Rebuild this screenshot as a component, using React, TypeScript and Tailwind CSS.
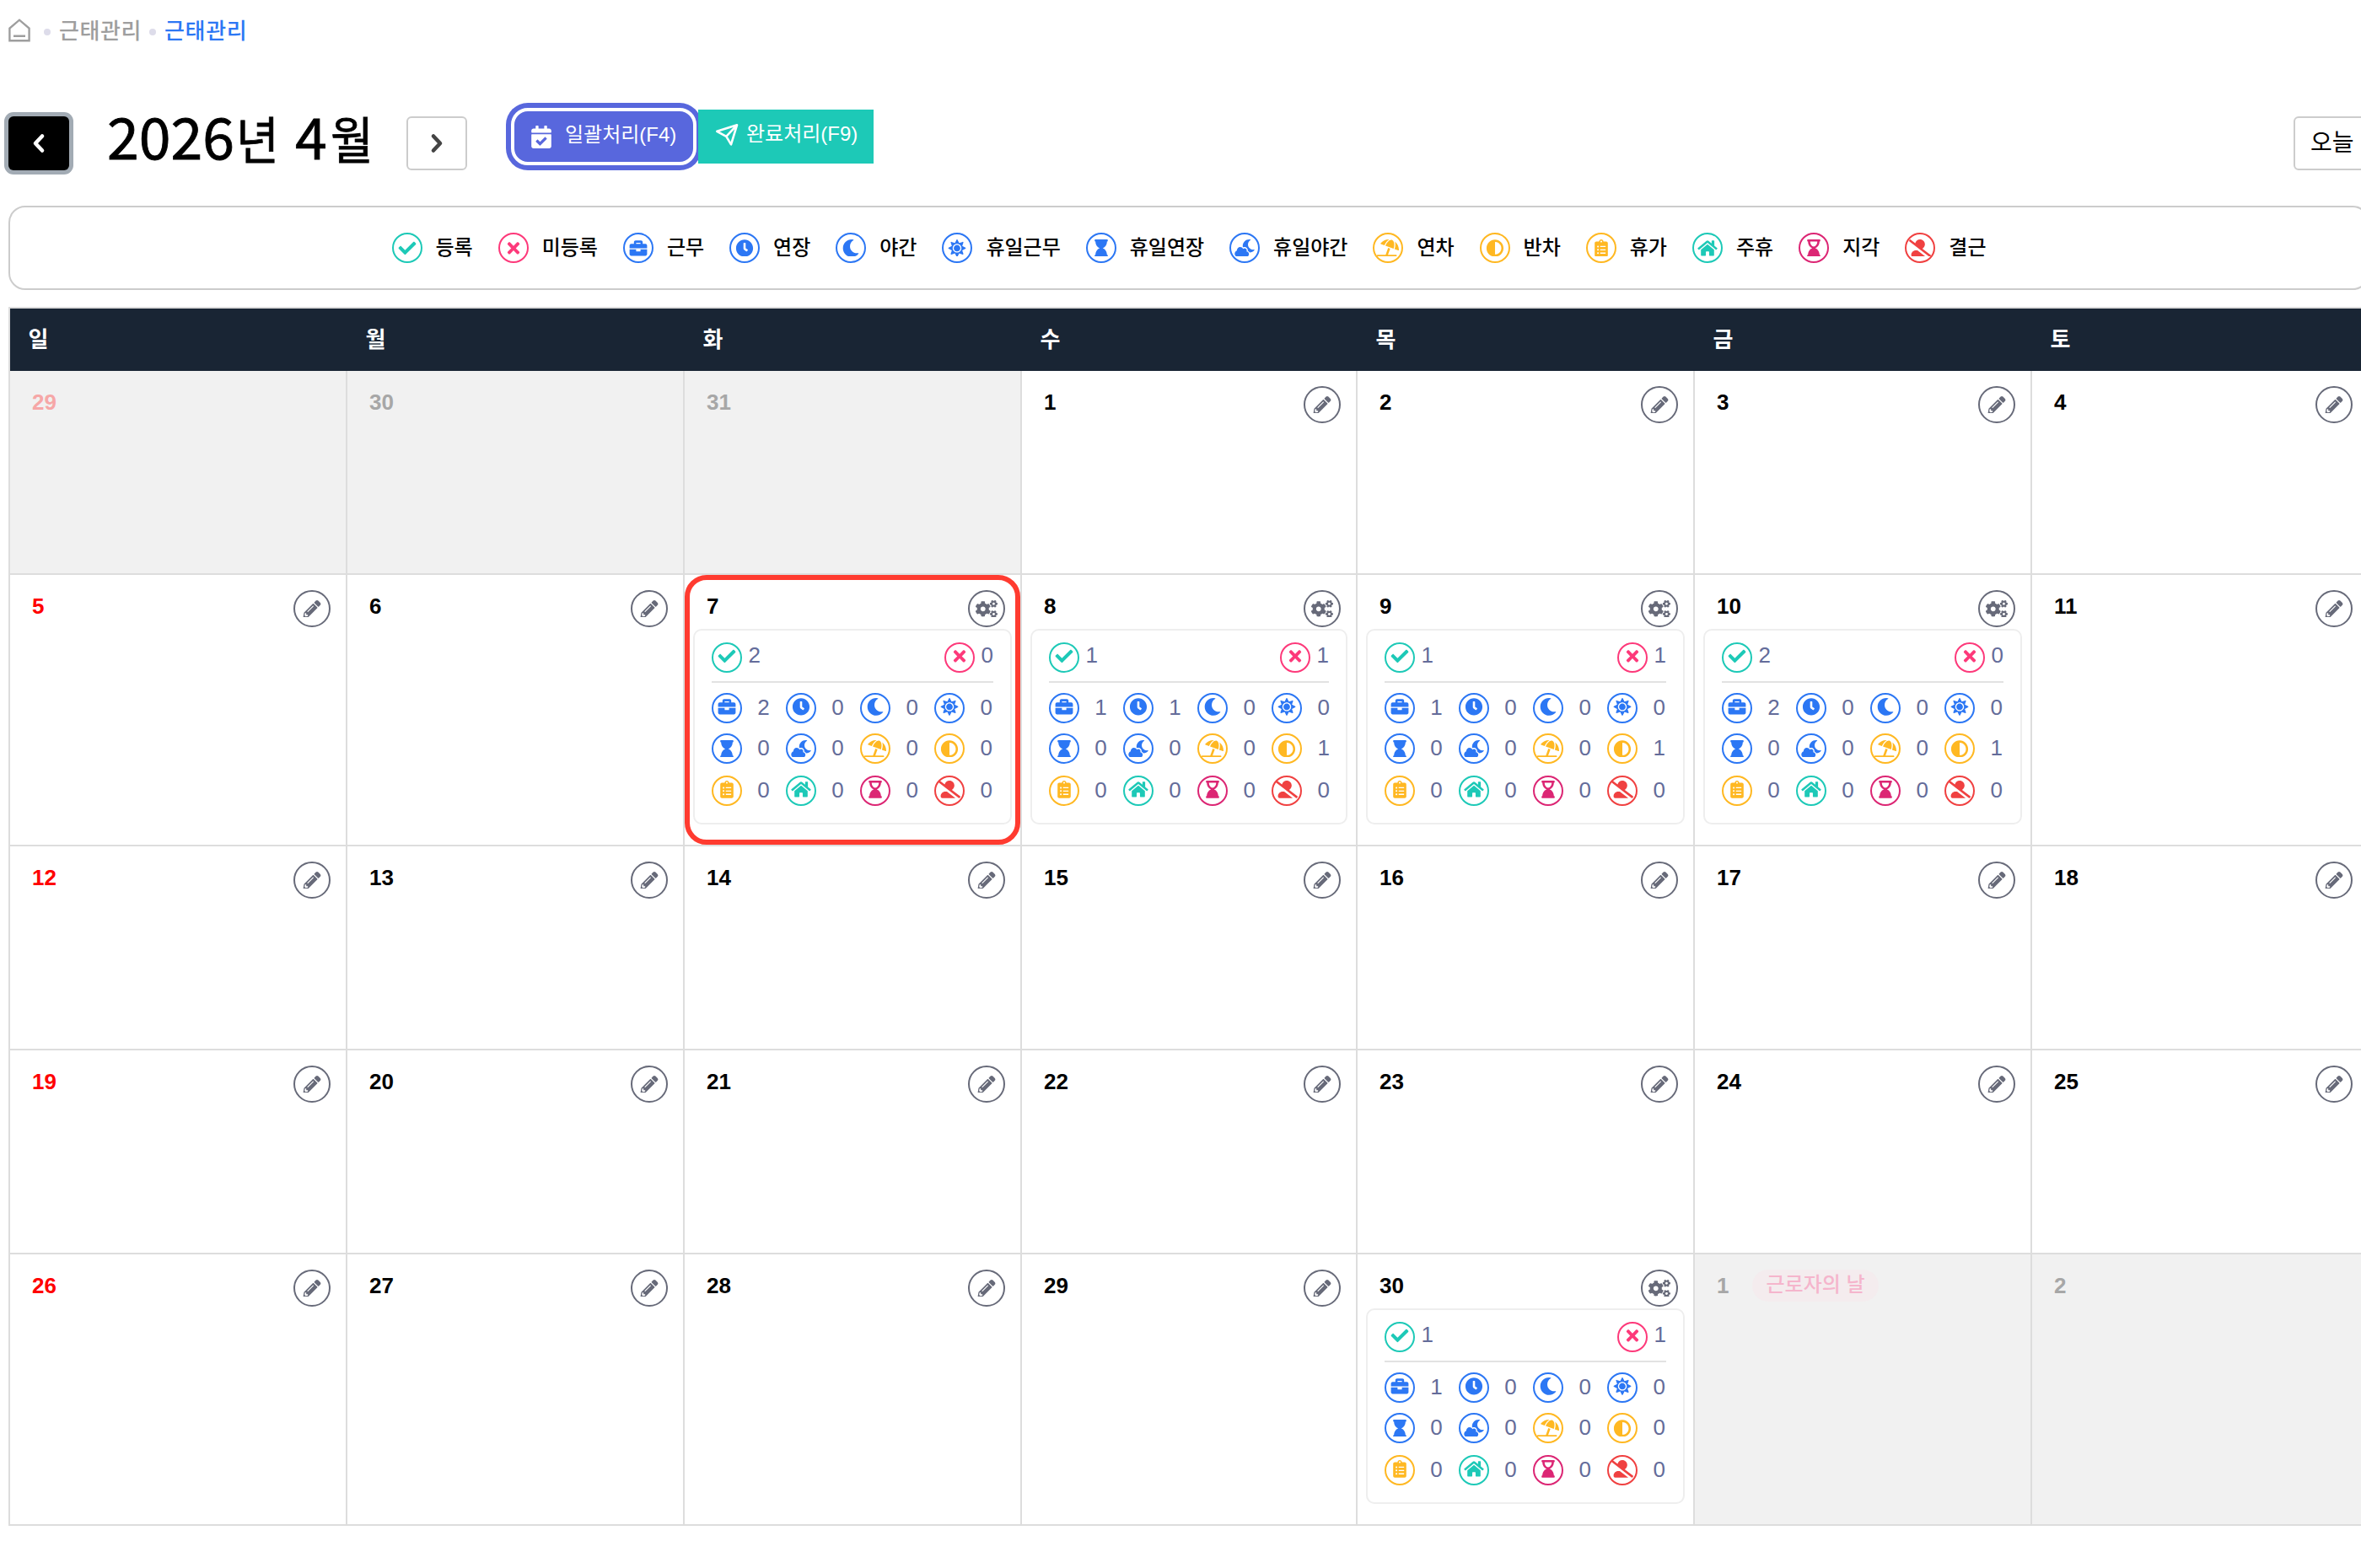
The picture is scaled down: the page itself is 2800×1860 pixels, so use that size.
import React from "react";
import type { IconType } from "react-icons";
import {
  FaAdjust,
  FaBriefcase,
  FaCalendarCheck,
  FaCheck,
  FaClipboardList,
  FaClock,
  FaCloudMoon,
  FaCogs,
  FaHome,
  FaHourglass,
  FaHourglassEnd,
  FaMoon,
  FaPencilAlt,
  FaSun,
  FaTimes,
  FaUmbrellaBeach,
  FaUserAltSlash,
} from "react-icons/fa";

type Kind = { label: string; icon: IconType; color: string };

const registered: Kind = { label: "등록", icon: FaCheck, color: "text-[#1dc9b7]" };
const unregistered: Kind = { label: "미등록", icon: FaTimes, color: "text-[#fd397a]" };

const kinds: Kind[] = [
  { label: "근무", icon: FaBriefcase, color: "text-[#2c77f4]" },
  { label: "연장", icon: FaClock, color: "text-[#2c77f4]" },
  { label: "야간", icon: FaMoon, color: "text-[#2c77f4]" },
  { label: "휴일근무", icon: FaSun, color: "text-[#2c77f4]" },
  { label: "휴일연장", icon: FaHourglass, color: "text-[#2c77f4]" },
  { label: "휴일야간", icon: FaCloudMoon, color: "text-[#2c77f4]" },
  { label: "연차", icon: FaUmbrellaBeach, color: "text-[#ffb822]" },
  { label: "반차", icon: FaAdjust, color: "text-[#ffb822]" },
  { label: "휴가", icon: FaClipboardList, color: "text-[#ffb822]" },
  { label: "주휴", icon: FaHome, color: "text-[#1dc9b7]" },
  { label: "지각", icon: FaHourglassEnd, color: "text-[#dc2674]" },
  { label: "결근", icon: FaUserAltSlash, color: "text-[#f04141]" },
];

type Summary = { done: number; missing: number; counts: number[] };
type Day = { date: number; muted?: boolean; holiday?: string; summary?: Summary; selected?: boolean };

const d = (date: number): Day => ({ date });
const off = (date: number, holiday?: string): Day => ({ date, muted: true, holiday });
const work = (date: number, done: number, missing: number, counts: number[], selected = false): Day => ({
  date,
  summary: { done, missing, counts },
  selected,
});

const weeks: { tall: boolean; days: Day[] }[] = [
  { tall: false, days: [off(29), off(30), off(31), d(1), d(2), d(3), d(4)] },
  {
    tall: true,
    days: [
      d(5),
      d(6),
      work(7, 2, 0, [2, 0, 0, 0, 0, 0, 0, 0, 0, 0, 0, 0], true),
      work(8, 1, 1, [1, 1, 0, 0, 0, 0, 0, 1, 0, 0, 0, 0]),
      work(9, 1, 1, [1, 0, 0, 0, 0, 0, 0, 1, 0, 0, 0, 0]),
      work(10, 2, 0, [2, 0, 0, 0, 0, 0, 0, 1, 0, 0, 0, 0]),
      d(11),
    ],
  },
  { tall: false, days: [d(12), d(13), d(14), d(15), d(16), d(17), d(18)] },
  { tall: false, days: [d(19), d(20), d(21), d(22), d(23), d(24), d(25)] },
  {
    tall: true,
    days: [
      d(26),
      d(27),
      d(28),
      d(29),
      work(30, 1, 1, [1, 0, 0, 0, 0, 0, 0, 0, 0, 0, 0, 0]),
      off(1, "근로자의 날"),
      off(2),
    ],
  },
];

function KindBadge({ kind, raised }: { kind: Kind; raised?: boolean }) {
  const Icon = kind.icon;
  return (
    <span
      className={`flex size-9 shrink-0 items-center justify-center rounded-full border-2 text-[20.8px] ${
        raised ? "pb-[3px]" : ""
      } ${kind.color}`}
    >
      <Icon className="h-[1em] w-[1.25em] shrink-0" />
    </span>
  );
}

function SummaryCard({ summary }: { summary: Summary }) {
  return (
    <div className="mx-[10px] h-[232px] rounded-[10px] border-2 border-[#eee] px-5 pt-[14px] text-[26px] leading-[30px] text-[#646c9a]">
      <div className="flex h-12 items-start justify-between border-b-2 border-[#e2e2e2]">
        <div className="flex gap-[7.5px]">
          <KindBadge kind={registered} raised />
          <span>{summary.done}</span>
        </div>
        <div className="flex gap-[7.5px]">
          <KindBadge kind={unregistered} raised />
          <span>{summary.missing}</span>
        </div>
      </div>
      <div className="mt-3 grid grid-cols-[88.1px_88.1px_88.1px_69px] grid-rows-[48px_50px_36px]">
        {kinds.map((kind, i) => (
          <div key={kind.label} className="flex items-start gap-[18.2px]">
            <KindBadge kind={kind} raised={i < 4 || i > 7} />
            <span className="pt-[2px]">{summary.counts[i]}</span>
          </div>
        ))}
      </div>
    </div>
  );
}

function DayCell({ day, sunday }: { day: Day; sunday: boolean }) {
  const color = day.muted ? (sunday ? "text-[#f6a7a7]" : "text-[#a7a7a7]") : sunday ? "text-[#ff0000]" : "text-black";
  const Action = day.summary ? FaCogs : FaPencilAlt;
  return (
    <div className={`relative min-w-0 border-r-2 border-b-2 border-[#ddd] ${day.muted ? "bg-[#f1f1f1]" : "bg-white"}`}>
      <div className="flex h-16 items-start justify-between pr-[18px] pl-[26px] pt-[18px]">
        <div className="flex items-start">
          <span className={`pt-1 text-[26px] leading-[30px] font-bold ${color}`}>{day.date}</span>
          {day.holiday && (
            <span className="ml-[28px] flex h-[38px] items-center rounded-full bg-[#f4ecee] px-4 pb-[2px] text-2xl font-medium whitespace-nowrap text-[#f5b5cc]">
              {day.holiday}
            </span>
          )}
        </div>
        {!day.muted && (
          <button className="flex size-11 items-center justify-center rounded-full border-2 border-[#676a79] text-[20.8px] text-[#676a79]">
            <Action className="h-[1em] w-[1.25em] shrink-0" />
          </button>
        )}
      </div>
      {day.summary && <SummaryCard summary={day.summary} />}
      {day.selected && <div className="absolute inset-0 rounded-[26px] border-6 border-[#ff3b30]" />}
    </div>
  );
}

function Chevron({ left }: { left?: boolean }) {
  return (
    <svg width="16" height="24" viewBox="0 0 16 24" fill="none" stroke="currentColor" strokeWidth="4.6" strokeLinecap="round" strokeLinejoin="round">
      <path d={left ? "M12 3.5 L4 12 L12 20.5" : "M4 3.5 L12 12 L4 20.5"} />
    </svg>
  );
}

export default function App() {
  return (
    <div className="h-[1860px] w-[2800px] overflow-hidden bg-white font-['Liberation_Sans','Noto_Sans_CJK_KR',sans-serif]">
      <div className="w-[2812px] pl-[10px]">
        <nav className="flex h-[72px] items-center text-[26px] font-medium text-[#9e9e9e]">
          <svg width="26" height="28" viewBox="0 0 26 28" fill="none" stroke="currentColor" strokeWidth="2.4">
            <path d="M1.4 26.3 V11.5 L13 1.7 L24.6 11.5 V26.3 Z M6 20.8 H20" />
          </svg>
          <i className="mt-1 ml-4 size-2 rounded-full bg-[#dddcea]" />
          <span className="mt-[2px] ml-[10px] tracking-[0.6px]">근태관리</span>
          <i className="mt-1 ml-[9px] size-2 rounded-full bg-[#dddcea]" />
          <span className="mt-[2px] ml-[10px] tracking-[0.6px] text-[#2c77f4]">근태관리</span>
        </nav>

        <header className="flex h-[172px] items-start pt-[66px]">
          <button className="flex h-16 w-18 items-center justify-center rounded-[6px] bg-black text-white ring-5 ring-[#a2abb4]">
            <Chevron left />
          </button>
          <h1 className="mt-[-7px] ml-[45px] flex h-16 w-[316px] items-baseline font-['Noto_Sans_CJK_KR'] text-[60px] leading-[58px] whitespace-nowrap text-black [-webkit-text-stroke:0.8px_black]">
            <span className="text-[68px]">2026</span>
            <span className="ml-[2px] w-[51px] origin-left scale-x-92">년</span>
            <span className="ml-[19px] text-[68px]">4</span>
            <span className="ml-[4px] w-[51px] origin-left scale-x-92">월</span>
          </h1>
          <button className="ml-[39px] flex h-16 w-18 items-center justify-center rounded-[6px] border-2 border-[#ccc] text-[#444]">
            <Chevron />
          </button>
          <button className="mt-[-10px] ml-[52px] flex h-17 w-[220px] items-center rounded-[20px] border-4 border-white bg-[#5867dd] pl-5 text-2xl whitespace-nowrap text-white ring-6 ring-[#5867dd]">
            <FaCalendarCheck className="h-[27px] w-6 shrink-0" />
            <span className="mb-1 ml-4">일괄처리(F4)</span>
          </button>
          <button className="relative mt-[-8px] ml-[2px] flex h-16 w-[208px] items-center bg-[#1dc9b7] pl-5 text-2xl whitespace-nowrap text-white">
            <svg className="mb-1" width="28" height="28" viewBox="0 0 28 28" fill="none" stroke="currentColor" strokeWidth="2.6" strokeLinejoin="round" strokeLinecap="round">
              <path d="M2.3 9.8 L26 2.3 L19 25.3 L13.3 15.8 Z M13.3 15.8 L26 2.3" />
            </svg>
            <span className="mb-[7px] ml-[9px]">완료처리(F9)</span>
          </button>
          <button className="ml-auto flex h-16 w-[92px] items-center rounded-[6px] border-2 border-[#ccc] pb-px pl-[18px] text-[28px] whitespace-nowrap text-black">
            오늘
          </button>
        </header>

        <section className="flex h-[100px] w-[2800px] items-center justify-center gap-[30px] rounded-[20px] border-2 border-[#ccc] text-2xl font-medium text-black">
          {[registered, unregistered, ...kinds].map((kind) => (
            <div key={kind.label} className="flex items-center gap-4 whitespace-nowrap">
              <KindBadge kind={kind} />
              <span className="pb-px">{kind.label}</span>
            </div>
          ))}
        </section>

        <main className="mt-5 w-[2800px] border-t-2 border-l-2 border-[#ddd]">
          <div className="grid h-[74px] grid-cols-[400px_400px_400px_398px_400px_400px_400px] bg-[#192534] text-[26px] font-bold text-white">
            {["일", "월", "화", "수", "목", "금", "토"].map((name) => (
              <div key={name} className="pt-[17px] pl-[21.5px] leading-[40px]">
                {name}
              </div>
            ))}
          </div>
          {weeks.map((week, w) => (
            <div
              key={w}
              className={`grid grid-cols-[400px_400px_400px_398px_400px_400px_400px] ${week.tall ? "h-[322px]" : "h-[242px]"}`}
            >
              {week.days.map((day, i) => (
                <DayCell key={i} day={day} sunday={i === 0} />
              ))}
            </div>
          ))}
        </main>
      </div>
    </div>
  );
}
